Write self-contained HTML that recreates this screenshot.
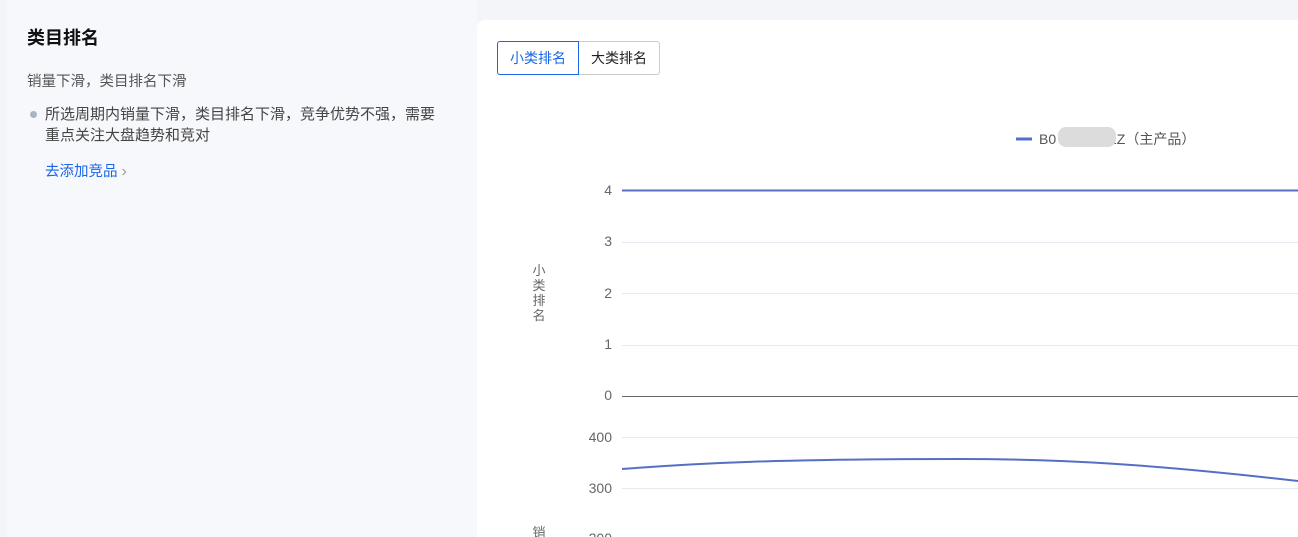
<!DOCTYPE html>
<html><head><meta charset="utf-8"><style>
*{margin:0;padding:0;box-sizing:border-box}
html,body{width:1298px;height:537px;overflow:hidden}
body{background:#f4f5f8;font-family:"Liberation Sans","Noto Sans CJK SC",sans-serif;position:relative}
.left{position:absolute;left:7px;top:0;width:470px;height:537px;background:#f7f8fc}
.card{position:absolute;left:477px;top:20px;width:830px;height:530px;background:#fff;border-radius:8px}
.t{position:absolute;white-space:nowrap}
</style></head><body>
<div class="left"></div>
<div class="card"></div>
<div class="t" style="left:27px;top:24px;font-size:18px;font-weight:bold;color:#111">类目排名</div>
<div class="t" style="left:27px;top:70px;font-size:14.5px;color:#555">销量下滑，类目排名下滑</div>
<div style="position:absolute;left:30px;top:111px;width:7px;height:7px;border-radius:50%;background:#aab2c8"></div>
<div class="t" style="left:45px;top:104px;font-size:15px;color:#444;line-height:21px">所选周期内销量下滑，类目排名下滑，竞争优势不强，需要<br>重点关注大盘趋势和竞对</div>
<div class="t" style="left:45px;top:160px;font-size:14.5px;color:#1a66e6">去添加竞品 <span style="color:#999;font-size:16px">›</span></div>
<div class="t" style="left:497px;top:41px;width:82px;height:34px;border:1px solid #1a66e6;border-radius:3px 0 0 3px;color:#1a66e6;font-size:14px;line-height:32px;text-align:center">小类排名</div>
<div class="t" style="left:579px;top:41px;width:81px;height:34px;border:1px solid #ccc;border-left:none;border-radius:0 3px 3px 0;color:#222;font-size:14px;line-height:32px;text-align:center">大类排名</div>
<svg style="position:absolute;left:0;top:0" width="1298" height="537">
<line x1="1016" y1="139" x2="1032" y2="139" stroke="#5470c6" stroke-width="3"/>
<text x="1039" y="144" font-size="14" fill="#555" font-family="Liberation Sans, sans-serif">B0</text>
<text x="1109" y="144" font-size="14" fill="#555" font-family="Liberation Sans, Noto Sans CJK SC, sans-serif">2Z（主产品）</text>
<rect x="1058" y="127" width="58" height="20" rx="8" fill="#dcdcdc"/>
<g stroke="#e6e9f0" stroke-width="1"><line x1="622" y1="242.5" x2="1298" y2="242.5"/><line x1="622" y1="293.5" x2="1298" y2="293.5"/><line x1="622" y1="345.5" x2="1298" y2="345.5"/><line x1="622" y1="437.5" x2="1298" y2="437.5"/><line x1="622" y1="488.5" x2="1298" y2="488.5"/></g>
<line x1="622" y1="396.5" x2="1298" y2="396.5" stroke="#666"/>
<line x1="622" y1="190.5" x2="1298" y2="190.5" stroke="#5470c6" stroke-width="2"/>
<path d="M622 469 C700 463,780 459,960 459 C1060 459,1150 464,1298 481" fill="none" stroke="#5470c6" stroke-width="2"/>
<g font-size="14" fill="#666" text-anchor="end" font-family="Liberation Sans, sans-serif">
<text x="612" y="195">4</text><text x="612" y="246">3</text><text x="612" y="298">2</text><text x="612" y="349">1</text><text x="612" y="400">0</text><text x="612" y="442">400</text><text x="612" y="493">300</text><text x="612" y="543">200</text></g>
<g font-size="13" fill="#666" font-family="Noto Sans CJK SC, sans-serif" text-anchor="middle"><text x="539" y="275">小</text><text x="539" y="290">类</text><text x="539" y="305">排</text><text x="539" y="320">名</text><text x="539" y="537">销</text></g>
</svg>
</body></html>
